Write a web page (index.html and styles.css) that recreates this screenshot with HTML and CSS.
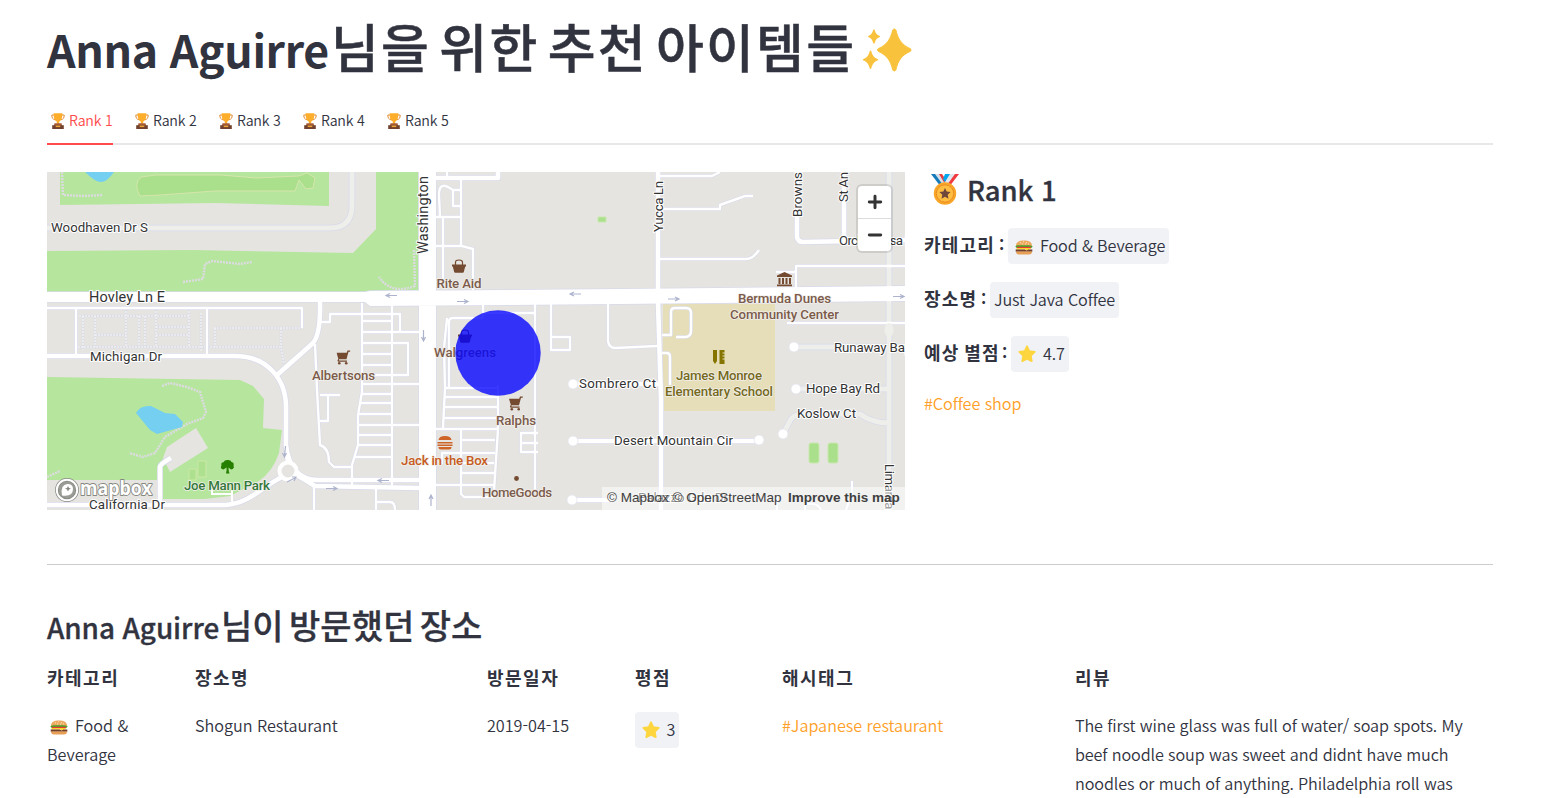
FILE: index.html
```html
<!DOCTYPE html>
<html lang="ko">
<head>
<meta charset="utf-8">
<title>Anna Aguirre</title>
<link rel="stylesheet" href="styles.css">
</head>
<body>
<svg class="defs" width="0" height="0" aria-hidden="true">
  <symbol id="trophy" viewBox="0 0 14 16">
    <path d="M3 2H.8c0 3 1 4.300 3.300 4.800M11 2h2.200c0 3-1 4.300-3.300 4.800" fill="none" stroke="#dd8b38" stroke-width="1"/>
    <path d="M2.600.3h8.800c0 5-1 7.400-3.200 8.300v2.200H5.800V8.600C3.600 7.700 2.600 5.300 2.600.3z" fill="#ffae2b"/>
    <path d="M3.500 10.300h7l.7 2.400H2.800z" fill="#a65b35"/><path d="M1.200 12.200h11.600V16H1.200z" fill="#70412f"/>
    <path d="M4.700 12.600h4.600v1.500H4.700z" fill="#f0a530"/>
  </symbol>
  <symbol id="burger" viewBox="0 0 18 15">
    <path d="M1 6C1 2 4 .5 9 .5S17 2 17 6z" fill="#eda95f"/>
    <path d="M5 2.800h1M8 1.800h1M11 2.600h1M7 3.800h1M10 4h1M13 3.900h1" stroke="#fff0cf" stroke-width=".8"/>
    <path d="M.3 6.200C3 4.600 6 5.500 9 5.300s6-.5 8.700.9l-1 1.500H1.300z" fill="#46a52e"/>
    <path d="M2 6.800h14v1.500H2z" fill="#e53b32"/>
    <path d="M1.500 8h15l-2 1.300-2 1.500-2-1.300h-9z" fill="#ffd32f"/>
    <path d="M.7 9.600h9l2 1 2-1h3.600v2.100H.7z" fill="#713e2e"/>
    <path d="M1 11.500h16c0 2-1 3-3 3H4c-2 0-3-1-3-3z" fill="#e79e55"/>
  </symbol>
  <symbol id="star" viewBox="0 0 18 18">
    <path d="M9 1.300l2.300 4.800 5.400.8-3.900 3.800.9 5.500L9 13.700l-4.700 2.500.9-5.500L1.300 6.900l5.400-.8z" fill="#fdd63f" stroke="#fdd63f" stroke-width="1.800" stroke-linejoin="round"/>
  </symbol>
  <symbol id="basket" viewBox="0 0 14 14">
    <path d="M3.500 6V3.200Q3.500 1 7 1t3.500 2.200V6" fill="none" stroke="currentColor" stroke-width="1.200"/>
    <path d="M0 5.500h14v2h-.8L11.800 13q-.2.800-1 .8H3.200q-.8 0-1-.8L.8 7.500H0z" fill="currentColor"/>
  </symbol>
  <symbol id="cart" viewBox="0 0 14 15">
    <path d="M0 2.800h10.200L11 .5h2.800v1.300H12l-2 7.400H2.500v1.300h8v1.300H1.800Q1 11.300 1 10.500l.8-1.800z" fill="currentColor"/>
    <circle cx="2.800" cy="13.200" r="1.300" fill="currentColor"/><circle cx="9.700" cy="13.200" r="1.300" fill="currentColor"/>
  </symbol>
</svg>

<h1 class="title"><span class="title-name">Anna Aguirre</span><span class="kr title-kr">님을 위한 추천 아이템들</span><svg class="sparkles" viewBox="0 0 51 46"><g fill="#f9c23c"><path d="M32 1c1-1.400 2.400-1.400 3.300 0 2.300 9.500 6 15.500 15 19.500 1.200.7 1.200 2.200 0 2.900-9 4-12.700 9.500-15 19.400-.9 1.500-2.300 1.500-3.300 0-2.300-9.900-6-15.400-15-19.400-1.300-.7-1.300-2.200 0-2.900C26 16.500 29.700 10.500 32 1z" stroke="#f9c23c" stroke-linejoin="round"/><path d="M11.700.7q.7-1 1.400 0c1 4 2.300 5.300 5.400 6.600q.7.500 0 1c-3.200 1.300-4.400 2.700-5.400 6.500q-.7 1-1.400 0c-1-3.800-2.200-5.200-5.200-6.500q-.7-.5 0-1C9.500 6 10.700 4.500 11.700.7z"/><path d="M8 23q.8-1 1.600 0c1.200 5 3 6.900 7 8.500q.8.600 0 1.200c-4 1.600-5.800 3.600-7 8.600q-.8 1-1.600 0c-1.200-5-3-7-7-8.600q-.8-.6 0-1.200C5 30 6.800 28 8 23z"/></g></svg></h1>

<nav class="tabs">
  <a class="tab active"><svg class="trophy"><use href="#trophy"/></svg><span>Rank 1</span></a>
  <a class="tab"><svg class="trophy"><use href="#trophy"/></svg><span>Rank 2</span></a>
  <a class="tab"><svg class="trophy"><use href="#trophy"/></svg><span>Rank 3</span></a>
  <a class="tab"><svg class="trophy"><use href="#trophy"/></svg><span>Rank 4</span></a>
  <a class="tab"><svg class="trophy"><use href="#trophy"/></svg><span>Rank 5</span></a>
</nav>

<main class="panel">
  <section class="map">
    <svg class="map-canvas" viewBox="47 172 858 338">
      <defs>
        <g id="minor">
          <path d="M47 308H302V328M76 308V356M207 308V356M320 322h10v-8h15M330 314h70v18M362 303V392L358 415V445L352 465V486M392 305V487M362 321h30M362 332h57M362 343h46v32h-46M362 354h30M362 365h30M362 384h57M361 394h31M360 403h32M358 414h34M358 425h61M358 435h34M357 445h35M354 457h38M315 344L317 390 320 445Q329 448 329 462L334 467H352M320 395h20M328 395v26h-8M314 487v23M376 488v22M376 502h14q5 0 5 8"/>
          <path d="M447 172v6M461 179v67M436 217h25M436 246h26l11 3v41M443 217v63M440 217l-1-22C439 181 447 186 453 190h8M453 190v16h8M483 304v14M449 388V322Q449 318 453 318H483M483 313h52M535 304V489M447 318l-3 30 1 40-2 40M445 388h53M445 397h53M444 407h54M443 418h54M436 429h61M498 385v44l-4 62M461 429v65l3 3h29M461 440h34M442 464v-11h53M461 463h33M461 473h33M436 485h59M538 433H521v19h17M521 443h17M551 304v43M551 337h19v13h-19V337M608 304v37q1 7 7 7L657 346"/>
          <path d="M658 176h54l8-4M658 259h88q7 0 13-9M658 209h62v-4l25-9h8M905 266H796v27M776 272h20M787 323h118M662 335h9V312q0-4 4-4h11q5 0 5 5v18q0 6-6 6h-9M662 353h5q3 0 3 4v28M852 481v12l-6 17M777 510v-13M805 510v-6q13-2 16 6"/>
        </g>
        <g id="major">
          <path d="M47 356H235C267 356 286 379 286 407V446L288 462M320 300Q321 336 312 344L277 375M47 505H226C250 503 260 488 282 477M286 445Q290 480 318 480H419M291 472Q304 479 315 486L419 488M160 505V467Q160 464 171 458"/>
          <path d="M436 178h62v-6M658 172V302L661 400V510M797 172v65q1 5 6 5l102-2M844 172v69M573 384h88M573 441H759M572 500h40"/>
        </g>
        <path id="pale" d="M47 228H330Q352 228 352 205V172M889 172V510M794 347H905M796 389h93M783 434l8-15Q795 414 805 414H860Q872 423 889 423"/>
        <path id="main-roads" d="M47 292H365L370 291 620 289 905 286V301L620 304 370 306 365 302H47ZM419 172h17V510h-17z"/>
      </defs>
      <rect x="47" y="172" width="858" height="338" fill="#e5e4e0"/>
      <g fill="#b6e59e">
        <path d="M60 172H329V206L215 203 60 205zM376 172h42v120H47V251l145-1 161 3 23-24z"/>
        <path d="M47 377l193 3 13 6 11 13-1 29 19 2-3 23q-6 18-20 28L230 496 205 499H162V480H47z"/>
      </g>
      <path d="M85 172q10 10 16 10t13-10h16" fill="#75cff0"/>
      <path d="M141 177l15-2h65l35 3 43-2 8-3 8 5-2 10-7 1-7-9-4 11H215l-55 4-20 1q-7-12 1-19z" fill="#aadf8c" stroke="#d5e6ab"/>
      <path d="M62 172l1 23 20 1 20-1M183 282l20-3 2-15 7-3 28 3 12-2M414 250l1 36q-24 9-36-9M162 386l8-3 17 4 13 5 6 20-3 6-16 6-22 13-10 16-12 4-14-4M47 477l13-6" fill="none" stroke="#dcdce0" stroke-width="2.400" stroke-dasharray="2 1"/>
      <path d="M136 413q4-8 15-7l14 7 10 1 8 8-1 5-25 7-7-4z" fill="#75cff0"/>
      <path d="M163 458l4-11 29-19 12 20-38 24z" fill="#e5e4e0"/>
      <path d="M198 461h8v16h-8zM189 469h7v11h-7z" fill="#ade18f" stroke="#cbe9a5"/>
      <path d="M663 304H775V411H663z" fill="#e5deb8"/>
      <path d="M598 217h8v5h-8z" fill="#aadf8c" stroke="#c7e8ae"/>
      <rect x="809" y="443" width="10" height="20" rx="2" fill="#aadf8c" stroke="#c7e8ae"/><rect x="828" y="443" width="10" height="20" rx="2" fill="#aadf8c" stroke="#c7e8ae"/>
      <g fill="none" stroke-linejoin="round">
        <path d="M79 316H189M83 316v34M95 316v31M126 308v39M139 316v31M145 316v31M156 308v39M189 308v39M201 313v38M95 335h31M156 327h33M156 335h33M214 328h88M215 328v19M281 328v19l3 17M78 347H280" stroke="#d9dbe6" stroke-width="2.400"/>
        <path d="M79 316H189M83 316v34M95 316v31M126 308v39M139 316v31M145 316v31M156 308v39M189 308v39M201 313v38M95 335h31M156 327h33M156 335h33M214 328h88M215 328v19M281 328v19l3 17M78 347H280" stroke="#f0f0f1" stroke-width="1.600" stroke-dasharray="2 1"/>
        <g stroke="#d8daea"><use href="#minor" stroke-width="3.600"/><use href="#pale" stroke-width="6.500"/><use href="#major" stroke-width="6"/><use href="#main-roads" stroke-width="1.500"/></g>
        <use href="#pale" stroke="#eeeeeb" stroke-width="5"/>
        <use href="#minor" stroke="#fff" stroke-width="2.400"/><use href="#major" stroke="#fff" stroke-width="4.600"/>
      </g>
      <use href="#main-roads" fill="#fff"/>
      <ellipse cx="889" cy="330" rx="4.500" ry="7" fill="#eeeeeb"/>
      <g fill="#fff" stroke="#e1e2ed" stroke-width=".7"><circle cx="573" cy="384" r="5"/><circle cx="573" cy="441" r="5"/><circle cx="759" cy="440" r="5"/><circle cx="572" cy="500" r="5"/><circle cx="794" cy="347" r="5"/><circle cx="796" cy="389" r="5"/><circle cx="783" cy="434" r="5"/></g>
      <circle cx="288" cy="471" r="8.500" fill="#e5e4e0" stroke="#fff" stroke-width="4"/>
      <path d="M212 489v5h20v-4M232 494v9" fill="none" stroke="#fff" stroke-width="2"/>
      <g fill="none" stroke="#adb3cd" stroke-width="1.200">
        <path d="M397 295.500H387m3-2-4 2 4 2M457 301.500h10m-3-2 4 2-4 2M581 294H571m3-2-4 2 4 2M668 299h10m-3-2 4 2-4 2M893 296.500h10m-3-2 4 2-4 2M423.500 330v10m-2-3 2 4 2-4M389 480.500H379m3-2-4 2 4 2M326 488.500h10m-3-2 4 2-4 2M431 506V496m-2 3 2-4 2 4M285.500 446l-1 10m-2-3 2 4 2-4M287 482l8-4m-3-1 4 0-2 4"/>
      </g>
      <g color="#744a30">
        <use href="#basket" x="452" y="259" width="14" height="14"/><use href="#basket" x="458" y="329" width="14" height="14"/>
        <use href="#cart" x="336.500" y="350" width="14" height="15"/><use href="#cart" x="509" y="396" width="14" height="15"/>
        <path d="M777 275.500l7.500-3.500 7.500 3.500v1.500h-15zM778.500 278h2v6h-2zm3.500 0h2v6h-2zm3.500 0h2v6h-2zm3.500 0h2v6h-2zM777 284.500h15v1.700h-15z" fill="currentColor"/>
        <circle cx="516.500" cy="478.500" r="2.400" fill="currentColor"/>
      </g>
      <g class="poi brown"><text x="436.500" y="288" textLength="45">Rite Aid</text><text x="434" y="357" textLength="62">Walgreens</text><text x="312" y="380" textLength="63">Albertsons</text><text x="496" y="425" textLength="40">Ralphs</text><text x="482" y="497" textLength="70">HomeGoods</text><text x="738" y="303" textLength="93">Bermuda Dunes</text><text x="730" y="319" textLength="109">Community Center</text></g>
      <g fill="#ce6427"><path d="M438.500 440q.5-4 6.500-4t6.500 4zM437.500 442h15v1.600h-15zM437.500 444.500h15v1.500h-15zM438.500 447h13q0 2.500-2.500 2.500h-8q-2.500 0-2.500-2.500z"/></g>
      <text class="poi orange" x="401" y="465" textLength="87">Jack in the Box</text>
      <path d="M713 350h4v11l-2 3-2-3zM719.500 350h5v14h-5z" fill="#867400"/><path d="M722.500 353h3M722.500 356h3M722.500 359h3" stroke="#e5deb8"/>
      <g class="poi olive"><text x="676" y="380" textLength="86">James Monroe</text><text x="665" y="396" textLength="108">Elementary School</text></g>
      <path d="M226 473.500q1-4 .5-6l-3 2q-4-1-2-4-1-3 2-3.300 1-2.300 4-2.200 3.500-.2 4 2 3 .5 2 3.500 1.500 3-2.500 4l-2.500-2q0 4 1 6z" fill="#268000"/>
      <text class="poi green" x="184" y="490" textLength="86">Joe Mann Park</text>
      <g class="street"><text x="51" y="232" textLength="97">Woodhaven Dr S</text><text x="89" y="302" textLength="76" class="large">Hovley Ln E</text><text x="90" y="361" textLength="72">Michigan Dr</text><text x="89" y="509" textLength="76">California Dr</text><text x="579" y="388" textLength="77">Sombrero Ct</text><text x="614" y="445" textLength="119">Desert Mountain Cir</text><text x="834" y="352" textLength="77">Runaway Bay</text><text x="806" y="393" textLength="74">Hope Bay Rd</text><text x="797" y="418" textLength="59">Koslow Ct</text><text x="839" y="245" textLength="73">Orchid Rosa L</text><text transform="translate(428 254) rotate(-90)" textLength="78" class="large">Washington</text><text transform="translate(663 232) rotate(-90)" textLength="51">Yucca Ln</text><text transform="translate(802 217) rotate(-90)" textLength="45">Browns</text><text transform="translate(848 202) rotate(-90)" textLength="30">St An</text><text transform="translate(885 464) rotate(90)" textLength="52">Limardas</text><text x="638" y="502" textLength="90">Palazzo Gdn Dr</text></g>
      <circle cx="498" cy="353" r="42.700" fill="#0000ff" fill-opacity=".78"/>
      <g><circle cx="67" cy="490" r="10.200" fill="#999b95" stroke="#858781" stroke-width="3.400"/><circle cx="67" cy="490" r="10.200" fill="none" stroke="#fff" stroke-width="2"/><path d="M62 495.500q-2-11 5.500-11.500 5.500 0 5.500 5 0 8-11 6.500z" fill="#fff"/><path d="M68 486l1 2 2 .5-2 1-1 2-1-2-2-1 2-.5z" fill="#858781"/><text class="wordmark" x="80" y="495" textLength="72" lengthAdjust="spacingAndGlyphs">mapbox</text></g>
    </svg>
    <div class="zoom"><span><svg viewBox="0 0 14 14"><path d="M7 2v10M2 7h10"/></svg></span><span><svg viewBox="0 0 14 14"><path d="M2 7h10"/></svg></span></div>
    <div class="attribution"><span class="credits">© Mapbox © OpenStreetMap</span><b>Improve this map</b></div>
  </section>

  <section class="details">
    <h3 class="rank"><svg class="medal" viewBox="0 0 28 32"><path d="M0 1h6l8 10-4 3z" fill="#157ab8"/><path d="M4 1h5l6 9-3 2z" fill="#d6dfe7"/><path d="M8 1h3l4 6-1 4z" fill="#e83a3f"/><path d="M28 1h-6l-8 10 4 3z" fill="#f13a3e"/><path d="M24 1h-5l-6 9 3 2z" fill="#e0e5ed"/><path d="M19 1h-5l-2 5 2 3z" fill="#00a6ed"/><circle cx="14" cy="20.500" r="11.200" fill="#f9a528"/><circle cx="14" cy="20.500" r="8.700" fill="#ffbd42" stroke="#e98d22"/><path d="M14 15l1.700 3.600 3.900.5-2.900 2.700.8 3.900-3.500-2-3.500 2 .8-3.900-2.900-2.700 3.900-.5z" fill="#70483b"/></svg><span>Rank 1</span></h3>
    <p class="field"><b class="kr category">카테고리</b><b class="colon">:</b><code><svg class="burger"><use href="#burger"/></svg><span>Food &amp; Beverage</span></code></p>
    <p class="field"><b class="kr place">장소명</b><b class="colon">:</b><code><span>Just Java Coffee</span></code></p>
    <p class="field"><b class="kr rating">예상 별점</b><b class="colon">:</b><code><svg class="star"><use href="#star"/></svg><span class="score">4.7</span></code></p>
    <p class="hashtag">#Coffee shop</p>
  </section>
</main>

<hr>

<h2 class="subtitle"><span class="sub-name">Anna Aguirre</span><span class="kr sub-kr">님이 방문했던 장소</span></h2>
<section class="visits heads"><b>카테고리</b><b>장소명</b><b>방문일자</b><b>평점</b><b>해시태그</b><b>리뷰</b></section>
<section class="visits values">
  <div><svg class="burger"><use href="#burger"/></svg><span>Food &amp;<br>Beverage</span></div>
  <div>Shogun Restaurant</div>
  <div>2019-04-15</div>
  <div><code><svg class="star"><use href="#star"/></svg><span>3</span></code></div>
  <div class="hash">#Japanese restaurant</div>
  <div class="review">The first wine glass was full of water/ soap spots. My<br>beef noodle soup was sweet and didnt have much<br>noodles or much of anything. Philadelphia roll was</div>
</section>
</body>
</html>
```
FILE: styles.css
```css
* { box-sizing: border-box; }
html, body { overflow: hidden; }
body { margin: 0; height: 798px; padding: 18.600px 65px 0 47px; background: #fff; color: #31333f; font: 350 16.200px/28.800px "Noto Sans CJK KR", sans-serif; letter-spacing: -.08px; }
h1, h2, h3, p { margin: 0; }
svg { flex: none; overflow: visible; }
.defs { position: absolute; }
.kr { line-height: 0; }
.title { height: 83.400px; font-size: 44.600px; line-height: 60px; font-weight: 700; white-space: nowrap; }
.title-name { display: inline-block; width: 284px; letter-spacing: -.35px; }
.title-kr { font-size: 52px; font-weight: 500; letter-spacing: 2.200px; word-spacing: -8.500px; -webkit-text-stroke: .5px #31333f; }
.sparkles { width: 51px; height: 44px; margin-left: 5px; vertical-align: -5px; }
.tabs { display: flex; gap: 18px; height: 43px; border-bottom: 2px solid #e8e8ea; font-size: 14.200px; line-height: 36px; letter-spacing: -.2px; }
.tab { display: flex; width: 66px; height: 43px; padding-left: 4px; white-space: nowrap; }
.tab span { margin-left: 4px; }
.tab.active { color: #ff4b4b; border-bottom: 2px solid #ff4b4b; }
.trophy { width: 14px; height: 16px; margin-top: 11px; }
.panel { display: flex; gap: 19px; height: 419px; padding-top: 27px; }
.map { position: relative; width: 858px; height: 338px; overflow: hidden; letter-spacing: 0; }
.map-canvas { display: block; width: 858px; height: 338px; overflow: hidden; }
.map text { font-family: Roboto, sans-serif; font-size: 13.300px; font-weight: 400; paint-order: stroke; stroke-linejoin: round; }
.map .poi, .map .poi text { font-weight: 500; stroke: #f1f0ec; stroke-width: 1.600px; }
.brown { fill: #7c5b4b; }
.orange { fill: #c65a20; }
.olive { fill: #76691c; }
.green { fill: #34783a; }
.street { fill: #333; stroke: #fff; stroke-width: 2px; }
.map text.large { font-size: 14.500px; }
.map text.wordmark { font-family: "Open Sans", sans-serif; font-size: 19px; font-weight: 700; fill: #fff; stroke: #858781; stroke-width: 1.800px; }
.zoom { position: absolute; top: 14px; right: 14px; width: 33px; height: 65px; border-radius: 4px; background: #fff; box-shadow: 0 0 0 2px rgba(0,0,0,.1); }
.zoom span { display: flex; height: 32px; align-items: center; justify-content: center; }
.zoom span + span { border-top: 1px solid #ddd; height: 33px; }
.zoom svg { width: 16px; height: 16px; fill: none; stroke: #333; stroke-width: 2.600; stroke-linecap: round; }
.attribution { position: absolute; right: 0; bottom: 0; display: flex; width: 303px; height: 23px; padding-left: 5px; background: rgba(255,255,255,.5); color: #404040; font: 13.500px/21px "Liberation Sans", sans-serif; white-space: nowrap; }
.credits { width: 181px; }
.details { width: 560px; }
.rank { display: flex; height: 56px; font-size: 27.500px; font-weight: 500; line-height: 35px; -webkit-text-stroke: .3px #31333f; }
.rank span { margin-left: 8px; }
.medal { width: 28px; height: 32px; margin: 1px 0 0 7px; }
.field { display: flex; height: 36px; margin-bottom: 18px; line-height: 33px; letter-spacing: -.12px; white-space: nowrap; }
.field .kr { font-size: 18px; line-height: 32px; letter-spacing: 1.200px; }
.category { width: 70px; }
.place { width: 52px; }
.rating { width: 73px; word-spacing: -1.500px; }
.colon { width: 14px; padding-left: 5px; font-weight: 700; }
code { display: inline-flex; height: 36px; padding: 0 4px; border-radius: 4px; background: #f0f2f6; font: inherit; line-height: 34px; white-space: nowrap; }
code .star { width: 18px; height: 18px; margin: 9px 7px 0 3px; }
.burger { width: 18px; height: 15px; }
code .burger { margin: 12px 7px 0 3px; }
.hashtag { margin-top: -1px; color: #ff9f29; line-height: 28.800px; }
hr { height: 1px; margin: 0; border: 0; background: #ccc; }
.subtitle { height: 95px; padding-top: 44px; font-size: 27.900px; font-weight: 500; line-height: 37px; white-space: nowrap; -webkit-text-stroke: .3px #31333f; }
.sub-name { display: inline-block; width: 174px; }
.sub-kr { font-size: 34px; letter-spacing: 0; word-spacing: -4px; }
.visits { display: grid; grid-template-columns: 130px 274px 130px 129px 275px 1fr; column-gap: 18px; }
.heads { height: 51px; padding-top: 3px; font-size: 18px; line-height: 28px; letter-spacing: 1.500px; }
.values { letter-spacing: -.02px; }
.values > div { white-space: nowrap; }
.values > div:first-child { white-space: normal; }
.values .burger { margin: 0 7px 0 3px; vertical-align: -3px; }
.values code { margin-top: 1px; margin-left: -.5px; }
.hash { color: #ff9f29; }
.review { letter-spacing: -.12px; }
```
